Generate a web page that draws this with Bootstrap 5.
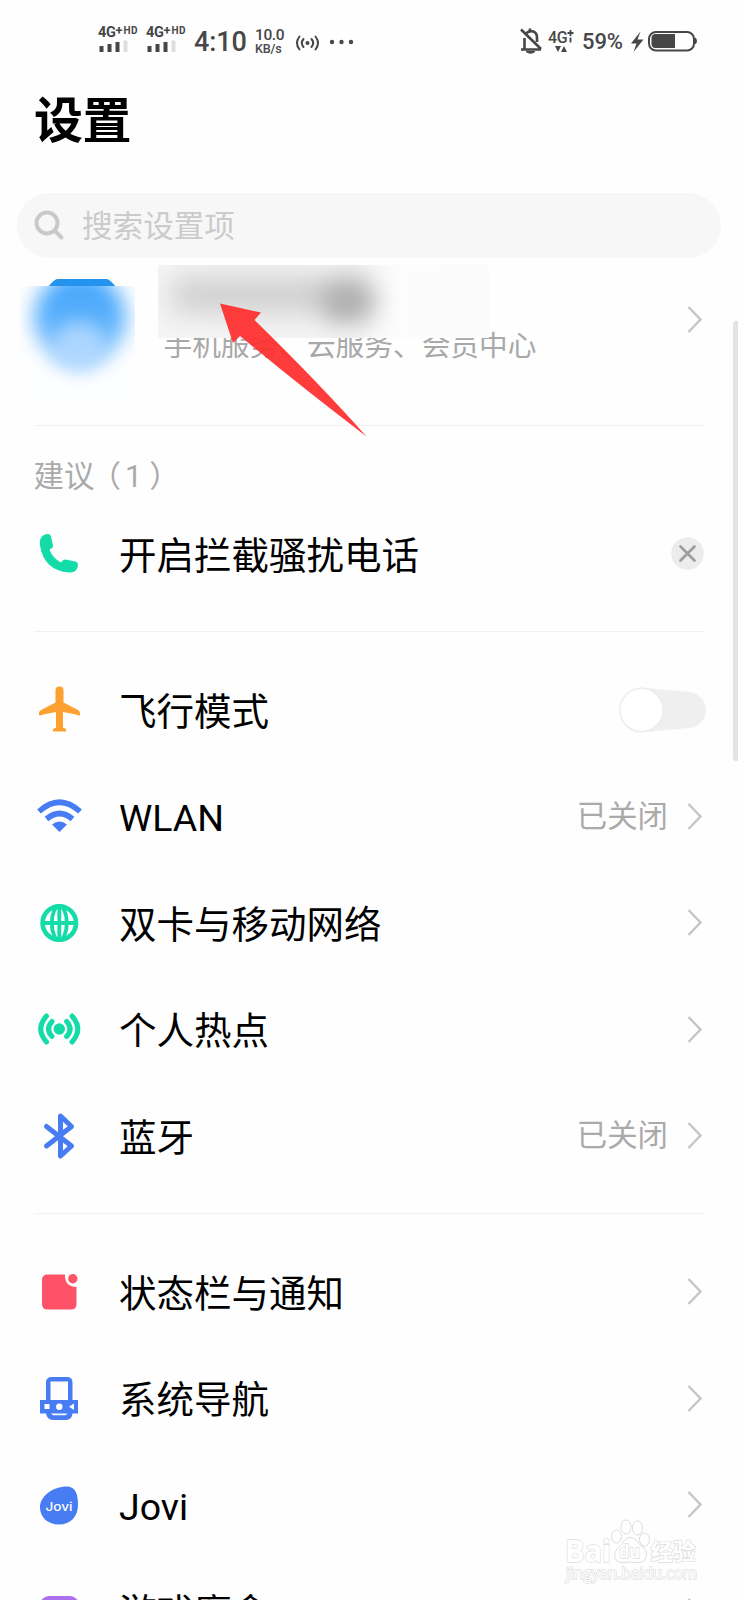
<!DOCTYPE html>
<html lang="zh-CN">
<head>
<meta charset="utf-8">
<meta name="viewport" content="width=device-width, initial-scale=1">
<title>设置</title>
<link href="https://cdn.jsdelivr.net/npm/bootstrap@5.3.0/dist/css/bootstrap.min.css" rel="stylesheet">
<style>
body{font-family:Roboto,"Noto Sans CJK SC",sans-serif;color:#000;background:#fdfdfd;line-height:1}
.screen{width:738px;height:1600px;background:#fefefe}
svg{display:block;flex:none;overflow:visible}
.status-strip{height:80px;padding-left:98px;color:#474747;font-weight:500}
.sim{width:48px;padding-top:26px}
.sim-tag{font-size:14.5px;line-height:14px;font-weight:700;letter-spacing:-.4px;height:14px;white-space:nowrap}
.sim-tag span{font-size:10px;position:relative;top:-3.5px;letter-spacing:.4px}
.sim-tag .plus{font-size:13px;top:-2px;letter-spacing:0;margin-right:1px}
.clock{font-size:27px;width:61px;padding-top:29px;letter-spacing:-.1px;white-space:nowrap}
.speed{width:39px;padding-top:28px;font-size:15.5px;line-height:14px;letter-spacing:-.4px}
.speed div+div{font-size:12.6px;line-height:13px;letter-spacing:-.2px}
.net{width:34px;padding-top:30px;font-size:16px;letter-spacing:-.4px;line-height:15px}
.percent{width:49px;padding-top:31px;font-size:22px;letter-spacing:-.1px;white-space:nowrap}
.page-title{height:113px;padding:17px 0 0 34px;font-size:49px;line-height:50px;font-weight:700;letter-spacing:-.5px}
.search-pill{height:65px;margin:0 17px;border-radius:33px;background:#f7f7f7;padding-left:17px;color:#cbcbcb;font-size:30.6px;gap:17px}
.search-pill span{padding-top:3px}
.account{height:167px}
.avatar-box{left:20px;top:28px;width:115px;height:115px;overflow:hidden;background:#fdfeff}
.avatar-cap{left:48px;top:21px}
.avatar-disc{left:14px;top:-14px;width:92px;height:92px;border-radius:50%;background:linear-gradient(#3fa3fb,#5bb1fc 55%,#93cbfc);filter:blur(10px)}
.avatar-face{left:32px;top:36px;width:54px;height:50px;border-radius:50%;background:#b5daff;opacity:.85;filter:blur(9px)}
.account-note{left:163.5px;top:73px;font-size:28.7px;line-height:30px;color:#a8a8a8;white-space:nowrap}
.name-veil{left:158px;top:7px;width:331px;height:73px;overflow:hidden;background:linear-gradient(90deg,#f5f5f5 0,#f4f4f4 60%,#fcfcfc 72%,#fbfbfb 100%)}
.smudge-a{left:14px;top:13px;width:196px;height:34px;background:#cdcdcd;filter:blur(14px)}
.smudge-b{left:163px;top:18px;width:52px;height:38px;border-radius:50%;background:#ababab;filter:blur(12px)}
.pointer-arrow{left:0;top:0;z-index:3}
.account-chevron{left:687px;top:48px}
.rule{height:1px;margin:0 33px 0 34px;background:#f1f1f1}
.hint{height:74.25px;padding:35px 0 0 33.5px;font-size:30.5px;line-height:32px;color:#aaa}
.hint .open{margin-left:-4px}
.hint .num{margin:0 7px 0 4px}
.setting{height:106.5px;padding:0 36px 0 34px}
.setting .ico{width:50px;height:50px;margin-right:35px}
.setting .name{font-size:37.5px;line-height:44px;padding-top:4px;white-space:nowrap}
.setting .state{font-size:30.4px;color:#aaa;margin-right:19px;padding-top:2px}
.group-gap{padding-top:24.25px}
.scroll-thumb{right:0;top:321px;width:5px;height:440px;background:#e3e3e3;border-radius:3px 0 0 3px}
.watermark{left:564px;top:1515px}
.wm-text{font-family:"Open Sans","Noto Sans CJK SC",sans-serif;paint-order:stroke;stroke:#dedede;stroke-width:1.4px;fill:#fff}
</style>
</head>
<body class="m-0">
<main class="screen position-relative overflow-hidden">
  <header class="status-strip d-flex align-items-start">
    <div class="sim"><div class="sim-tag">4G<span class="plus">+</span><span>HD</span></div>
      <svg width="30" height="13"><path fill="#474747" d="M1.500 6h4v6h-4zM9.500 4h4v8h-4zM17.500 2h4v10h-4z"/><path fill="#dedede" d="M25.500.5h4V12h-4z"/></svg></div>
    <div class="sim"><div class="sim-tag">4G<span class="plus">+</span><span>HD</span></div>
      <svg width="30" height="13"><path fill="#474747" d="M1.500 6h4v6h-4zM9.500 4h4v8h-4zM17.500 2h4v10h-4z"/><path fill="#dedede" d="M25.500.5h4V12h-4z"/></svg></div>
    <div class="clock">4:10</div>
    <div class="speed"><div>10.0</div><div>KB/s</div></div>
    <svg width="226" height="80" viewBox="294 0 226 80" fill="none" stroke="#474747" stroke-width="2" stroke-linecap="round"><circle cx="307.500" cy="43" r="2" fill="#474747" stroke="none"/><path d="M303.500 39q-3.400 4 0 8M311.500 39q3.400 4 0 8M299.500 36.500q-5 6.500 0 13M315.500 36.500q5 6.500 0 13"/><g fill="#474747" stroke="none"><circle cx="332" cy="42" r="2.200"/><circle cx="341.500" cy="42" r="2.200"/><circle cx="351" cy="42" r="2.200"/></g></svg>
    <svg width="28" height="80" viewBox="520 0 28 80" fill="none" stroke="#474747" stroke-width="2.600"><path d="M521 49.500h20M524.500 49V38M526.500 33q3.500-2.800 7-1.500 3.500 1.500 3.500 6V42M521 29.500L541 49M530 30.500v-2"/><path d="M526 51.500h9q-4.500 3.500-9 0z" fill="#474747" stroke-width="1"/></svg>
    <div class="net d-flex align-items-start">4G<svg width="7" height="16" viewBox="0 0 7 16" stroke="#474747" stroke-width="1.800" fill="none"><path d="M3.500 0v6M.500 3h6M3.500 7.500v5"/></svg><svg class="position-absolute" style="left:555px;top:46px" width="12" height="7"><path fill="#474747" d="M0 0h6L3 6zM6 6h6L9 0z"/></svg></div>
    <div class="percent">59%</div>
    <svg width="70" height="80" viewBox="631 0 70 80"><path fill="#474747" d="M640.500 31.500L631 43.500h5.500L633.500 52 643.500 39.500h-6z"/><rect x="649" y="32" width="45" height="18.500" rx="7" fill="none" stroke="#474747" stroke-width="2"/><path fill="#474747" d="M654.500 34H675v14h-20.500q-3-1-3-4v-6q0-3 3-4zM695 37.500q2 .5 2 3.500t-2 3.500z"/></svg>
  </header>

  <h1 class="page-title m-0">设置</h1>

  <div class="search-pill d-flex align-items-center">
    <svg width="31" height="31" viewBox="0 0 31 31" fill="none" stroke="#c9c9c9" stroke-width="4" stroke-linecap="round"><circle cx="13" cy="13" r="10.500"/><path d="M21 21l6.500 6.500"/></svg>
    <span>搜索设置项</span>
  </div>

  <section class="account position-relative">
    <svg class="avatar-cap position-absolute" width="68" height="8"><path fill="#2493ee" d="M0 8Q5 1.500 9 0H59Q63 1.500 68 8z"/></svg>
    <div class="avatar-box position-absolute"><div class="avatar-disc position-absolute"></div><div class="avatar-face position-absolute"></div></div>
    <div class="account-note position-absolute">手机服务、云服务、会员中心</div>
    <div class="name-veil position-absolute"><div class="smudge-a position-absolute"></div><div class="smudge-b position-absolute"></div></div>
    <svg class="pointer-arrow position-absolute" width="400" height="180" viewBox="0 258 400 180"><path fill="#ff3030" fill-opacity=".94" d="M220 303.500L261 312.500 254.500 320Q318 382 366.500 436.500 300 386 240 336L233 343z"/></svg>
    <svg class="account-chevron position-absolute" width="15" height="27" viewBox="0 0 15 27" fill="none" stroke="#c6c6c6" stroke-width="2.500"><path d="M1.500 1L13.500 13.500 1.500 26"/></svg>
  </section>
  <div class="rule"></div>
  <div class="hint">建议<span class="open">（</span><span class="num">1</span>）</div>

  <div class="setting d-flex align-items-center">
    <svg class="ico" viewBox="34 528.500 50 50"><path fill="#14dca8" d="M44 534.500Q50 532 51 536L53 545Q53.200 547.500 49.500 549 52 557 61 562 63 558.800 65.500 559L75.500 561Q79 562 77.500 567 75.500 572.500 69 572 44 570 40 545 39 537 44 534.500z"/></svg>
    <span class="name me-auto">开启拦截骚扰电话</span>
    <svg width="33" height="33" viewBox="0 0 33 33" style="margin-right:-1.5px"><circle cx="16.500" cy="16.500" r="16.300" fill="#ececec"/><path d="M9.500 9.500l14 14m0-14l-14 14" stroke="#9e9e9e" stroke-width="2.800" stroke-linecap="round"/></svg>
  </div>
  <div class="group-gap"></div>
  <div class="rule"></div>
  <div class="group-gap"></div>

  <div class="setting d-flex align-items-center">
    <svg class="ico" viewBox="34 684.500 50 50"><path fill="#fca130" d="M55.500 690q0-4 4-4t4 4V702L78 709.500Q80.500 711 80 714.500 79 715.500 76 714L63 711.500V727L66 728.500V731H53V728.500L56 727V711.500L43 714Q40 715.500 39 714.500 38.500 711 41 709.500L55.500 702z"/></svg>
    <span class="name me-auto">飞行模式</span>
    <svg width="86" height="46" viewBox="0 0 86 46" style="margin-right:-2.500px"><path fill="#efefef" d="M22.500.5L69 5A18 18 0 0 1 69 41L22.500 45.500z"/><circle cx="22.500" cy="23" r="21.700" fill="#fff" stroke="#ededed" stroke-width="1.600"/></svg>
  </div>
  <div class="setting d-flex align-items-center">
    <svg class="ico" viewBox="34 791.500 50 50" fill="none" stroke="#477cf3" stroke-width="5.600"><path d="M39 812Q59.500 793.500 80 812M46.500 819.500Q59.500 808.500 72.500 819.500"/><path fill="#477cf3" stroke="none" d="M52 825Q59.500 819 67 825L59.500 832.500z"/></svg>
    <span class="name me-auto">WLAN</span><span class="state">已关闭</span>
    <svg width="15" height="27" viewBox="0 0 15 27" fill="none" stroke="#c6c6c6" stroke-width="2.500"><path d="M1.500 1L13.500 13.500 1.500 26"/></svg>
  </div>
  <div class="setting d-flex align-items-center">
    <svg class="ico" viewBox="34 897.500 50 50" fill="none" stroke="#14dca8" stroke-width="4.600"><circle cx="59.300" cy="922.500" r="16.700"/><ellipse cx="59.300" cy="922.500" rx="7.500" ry="17" stroke-width="3.800"/><path d="M42 922.500h35M59.300 905v35" stroke-width="3.800"/></svg>
    <span class="name me-auto">双卡与移动网络</span>
    <svg width="15" height="27" viewBox="0 0 15 27" fill="none" stroke="#c6c6c6" stroke-width="2.500"><path d="M1.500 1L13.500 13.500 1.500 26"/></svg>
  </div>
  <div class="setting d-flex align-items-center">
    <svg class="ico" viewBox="34 1004 50 50" fill="none" stroke="#14dca8" stroke-width="5" stroke-linecap="round"><circle cx="59.300" cy="1029" r="5.700" fill="#14dca8" stroke="none"/><path d="M52 1021.500q-7 7.500 0 15M66.600 1021.500q7 7.500 0 15M46.500 1016q-11.500 13 0 26M72 1016q11.500 13 0 26"/></svg>
    <span class="name me-auto">个人热点</span>
    <svg width="15" height="27" viewBox="0 0 15 27" fill="none" stroke="#c6c6c6" stroke-width="2.500"><path d="M1.500 1L13.500 13.500 1.500 26"/></svg>
  </div>
  <div class="setting d-flex align-items-center">
    <svg class="ico" viewBox="34 1110.500 50 50" fill="none" stroke="#477cf3" stroke-width="5" stroke-linecap="round" stroke-linejoin="round"><path d="M46.500 1126L71.500 1145.500 60.500 1155.500V1115.500L71.500 1126 46.500 1145.500"/></svg>
    <span class="name me-auto">蓝牙</span><span class="state">已关闭</span>
    <svg width="15" height="27" viewBox="0 0 15 27" fill="none" stroke="#c6c6c6" stroke-width="2.500"><path d="M1.500 1L13.500 13.500 1.500 26"/></svg>
  </div>
  <div class="group-gap"></div>
  <div class="rule"></div>
  <div class="group-gap"></div>

  <div class="setting d-flex align-items-center">
    <svg class="ico" viewBox="34 1266.500 50 50"><path fill="#fd5268" d="M47.500 1274H65Q64.500 1286 76.500 1286.500V1303.500Q76.500 1309 71 1309H47.500Q42 1309 42 1303.500V1279.500Q42 1274 47.500 1274z"/><circle cx="72.800" cy="1278.300" r="4.700" fill="#fd5268"/></svg>
    <span class="name me-auto">状态栏与通知</span>
    <svg width="15" height="27" viewBox="0 0 15 27" fill="none" stroke="#c6c6c6" stroke-width="2.500"><path d="M1.500 1L13.500 13.500 1.500 26"/></svg>
  </div>
  <div class="setting d-flex align-items-center">
    <svg class="ico" viewBox="34 1373 50 50"><path fill="#477cf3" fill-rule="evenodd" d="M52 1377H67Q72.500 1377 72.500 1382.500V1400H78V1413.500H72.500Q72 1420 66 1420H53Q47 1420 46 1413.500H40V1400H46V1382.500Q46 1377 52 1377zM50.500 1381.500V1400H68V1381.500z"/><path fill="#fff" d="M44.500 1404h5v5h-5zM74 1403.500v6.500l-5-3.200zM51 1413.500h16.500l-2 1.700H53z"/><circle cx="59.300" cy="1406.700" r="3.200" fill="#fff"/></svg>
    <span class="name me-auto">系统导航</span>
    <svg width="15" height="27" viewBox="0 0 15 27" fill="none" stroke="#c6c6c6" stroke-width="2.500"><path d="M1.500 1L13.500 13.500 1.500 26"/></svg>
  </div>
  <div class="setting d-flex align-items-center">
    <svg class="ico" viewBox="34 1479.500 50 50"><path fill="#477cf3" d="M63 1486.200C75 1484.500 78 1492 78 1504 78 1516 71 1524 59 1524 47 1524 40 1516 40 1507 40 1497 50 1488 63 1486.200z"/><text x="45.500" y="1510" font-family="Inter" font-size="12" font-weight="500" textLength="27" lengthAdjust="spacingAndGlyphs" fill="#fff">Jovi</text></svg>
    <span class="name me-auto">Jovi</span>
    <svg width="15" height="27" viewBox="0 0 15 27" fill="none" stroke="#c6c6c6" stroke-width="2.500"><path d="M1.500 1L13.500 13.500 1.500 26"/></svg>
  </div>
  <div class="setting d-flex align-items-center">
    <svg class="ico" viewBox="34 1586 50 50"><rect x="40" y="1596" width="39" height="30" rx="9" fill="#aa70ee"/></svg>
    <span class="name me-auto">游戏魔盒</span>
    <svg width="15" height="27" viewBox="0 0 15 27" fill="none" stroke="#c6c6c6" stroke-width="2.500"><path d="M1.500 1L13.500 13.500 1.500 26"/></svg>
  </div>

  <div class="scroll-thumb position-absolute"></div>
  <svg class="watermark position-absolute" width="136" height="70" viewBox="564 1515 136 70">
    <text class="wm-text" x="565" y="1562" font-size="31" font-weight="700" textLength="46" lengthAdjust="spacingAndGlyphs">Bai</text>
    <g fill="#fff" stroke="#dcdcdc" stroke-width="1"><ellipse cx="616.500" cy="1536.500" rx="5" ry="6.500"/><ellipse cx="626" cy="1527" rx="5" ry="7"/><ellipse cx="637.500" cy="1528" rx="5" ry="7"/><ellipse cx="644.500" cy="1539.500" rx="5" ry="6.500"/><path d="M630 1537.500q5 0 9.500 7 8 5 7 11-1.500 7.500-9 7-7-1-14 0-8 .5-9-7 0-5 7-11 4-7 8.500-7z"/></g>
    <text class="wm-text" x="619" y="1558" font-size="18" font-weight="700" textLength="21" lengthAdjust="spacingAndGlyphs">du</text>
    <text class="wm-text" x="650.500" y="1560" font-size="22.500" font-weight="700">经验</text>
    <text class="wm-text" x="566" y="1578.500" font-size="16" textLength="131" lengthAdjust="spacingAndGlyphs">jingyan.baidu.com</text>
  </svg>
</main>
<script src="https://cdn.jsdelivr.net/npm/bootstrap@5.3.0/dist/js/bootstrap.bundle.min.js"></script>
</body>
</html>
